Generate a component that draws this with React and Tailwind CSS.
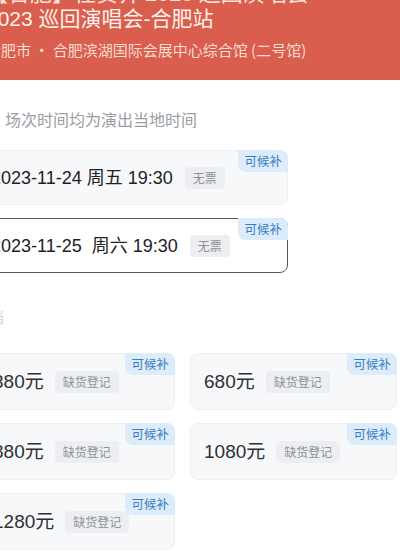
import React from "react";

const sessions = [
  { date: "2023-11-24 周五 19:30", selected: false },
  { date: "2023-11-25  周六 19:30", selected: true },
];

const prices = ["380元", "680元", "880元", "1080元", "1280元"];

const numFont = { fontFamily: "'Liberation Sans', 'Noto Sans CJK SC', sans-serif" };

const Badge = () => (
  <span className="absolute -top-px -right-px rounded-bl-lg rounded-tr-lg bg-[#dcecfa] px-1.5 py-[2px] text-[12.5px] leading-[18px] text-[#3b7bc2]">
    可候补
  </span>
);

const Tag = ({ children }) => (
  <span className="rounded bg-[#eceef1] px-2 py-[3px] text-[12px] leading-[16px] text-[#8d929a]">
    {children}
  </span>
);

export default function App() {
  return (
    <div
      className="relative h-[554px] w-[400px] overflow-hidden bg-white"
      style={{ fontFamily: "'Noto Sans CJK SC', 'Noto Sans', sans-serif" }}
    >
      {/* Header */}
      <div className="-ml-[22px] flex h-[80px] w-[440px] flex-col bg-[#da5e4d] pl-[8px] pr-4">
        <p className="-mt-[22px] whitespace-nowrap text-[22px] leading-[27px] text-[#fbe3dc]">【合肥】任贤齐 2023 巡回演唱会</p>
        <p className="whitespace-nowrap text-[21px] leading-[27px] text-[#fdf1ec]" style={numFont}>
          2023 巡回演唱会-合肥站
        </p>
        <p className="mt-[7px] whitespace-nowrap text-[15px] leading-[22px] text-[#f9dcd3]">合肥市 · 合肥滨湖国际会展中心综合馆 (二号馆)</p>
      </div>

      <div className="-ml-[23px] pt-[28px]">
        {/* Hint */}
        <div className="flex items-center gap-[5px] pl-[9px] text-[16px] leading-[22px] text-[#9a9da3]">
          <span className="flex h-[14px] w-[14px] items-center justify-center rounded-full border border-[#d3d5d8] text-[9px] leading-none text-[#d3d5d8]">
            i
          </span>
          <span>场次时间均为演出当地时间</span>
        </div>

        {/* Sessions */}
        <div className="mt-[20px] flex w-[311px] flex-col gap-[13px]">
          {sessions.map((s) => (
            <div
              key={s.date}
              className={`relative flex h-[55px] items-center gap-[12px] rounded-lg pl-[13px] ${
                s.selected ? "border border-[#55585d] bg-white" : "border border-[#eeeff1] bg-[#f7f8f9]"
              }`}
            >
              <span className="whitespace-pre text-[18px] leading-none text-[#1f2124]" style={numFont}>
                {s.date}
              </span>
              <Tag>无票</Tag>
              <Badge />
            </div>
          ))}
        </div>

        {/* Section label */}
        <p className="-ml-[5px] mt-[31px] text-[16px] leading-[24px] text-[#d5d7da]">票档</p>

        {/* Prices */}
        <div className="mt-[25px] grid grid-cols-[196px_207px] gap-x-[15px] gap-y-[13px] pl-[2px]">
          {prices.map((p) => (
            <div
              key={p}
              className="relative flex h-[57px] items-center gap-[11px] rounded-lg border border-[#eeeff1] bg-[#f7f8f9] pl-[13px]"
            >
              <span className="text-[19px] leading-none text-[#2e3034]" style={numFont}>
                {p}
              </span>
              <Tag>缺货登记</Tag>
              <Badge />
            </div>
          ))}
        </div>
      </div>
    </div>
  );
}
